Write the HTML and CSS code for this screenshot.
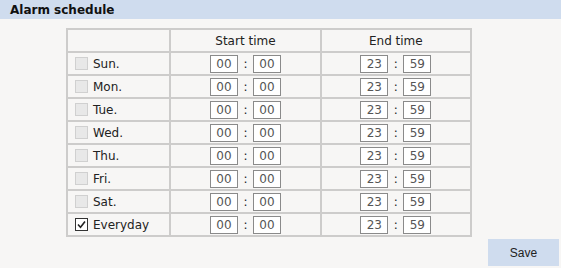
FILE: index.html
```html
<!DOCTYPE html>
<html>
<head>
<meta charset="utf-8">
<link rel="stylesheet" href="styles.css">
</head>
<body>
<div class="bar"><span class="title">Alarm schedule</span></div>
<table class="sched">
  <tr class="head"><th class="c1"></th><th class="c2">Start time</th><th class="c3">End time</th></tr>
  <tr><td class="day"><span class="cb"></span>Sun.</td><td><div class="tm"><span class="in">00</span><span class="col">:</span><span class="in">00</span></div></td><td><div class="tm"><span class="in">23</span><span class="col">:</span><span class="in">59</span></div></td></tr>
  <tr><td class="day"><span class="cb"></span>Mon.</td><td><div class="tm"><span class="in">00</span><span class="col">:</span><span class="in">00</span></div></td><td><div class="tm"><span class="in">23</span><span class="col">:</span><span class="in">59</span></div></td></tr>
  <tr><td class="day"><span class="cb"></span>Tue.</td><td><div class="tm"><span class="in">00</span><span class="col">:</span><span class="in">00</span></div></td><td><div class="tm"><span class="in">23</span><span class="col">:</span><span class="in">59</span></div></td></tr>
  <tr><td class="day"><span class="cb"></span>Wed.</td><td><div class="tm"><span class="in">00</span><span class="col">:</span><span class="in">00</span></div></td><td><div class="tm"><span class="in">23</span><span class="col">:</span><span class="in">59</span></div></td></tr>
  <tr><td class="day"><span class="cb"></span>Thu.</td><td><div class="tm"><span class="in">00</span><span class="col">:</span><span class="in">00</span></div></td><td><div class="tm"><span class="in">23</span><span class="col">:</span><span class="in">59</span></div></td></tr>
  <tr><td class="day"><span class="cb"></span>Fri.</td><td><div class="tm"><span class="in">00</span><span class="col">:</span><span class="in">00</span></div></td><td><div class="tm"><span class="in">23</span><span class="col">:</span><span class="in">59</span></div></td></tr>
  <tr><td class="day"><span class="cb"></span>Sat.</td><td><div class="tm"><span class="in">00</span><span class="col">:</span><span class="in">00</span></div></td><td><div class="tm"><span class="in">23</span><span class="col">:</span><span class="in">59</span></div></td></tr>
  <tr><td class="day"><span class="cb on"><svg viewBox="0 0 13 13" width="13" height="13"><path d="M3 6.5 L5.5 9.2 L10 3.5" fill="none" stroke="#222" stroke-width="1.6"/></svg></span>Everyday</td><td><div class="tm"><span class="in">00</span><span class="col">:</span><span class="in">00</span></div></td><td><div class="tm"><span class="in">23</span><span class="col">:</span><span class="in">59</span></div></td></tr>
</table>
<div class="foot"><button class="save">Save</button></div>
</body>
</html>
```
FILE: styles.css
```css
html, body {
  margin: 0;
  padding: 0;
  background: #f7f6f5;
  font-family: "DejaVu Sans", Verdana, sans-serif;
  font-size: 12px;
  color: #222;
}
.bar {
  height: 19px;
  background: #cfdcee;
  padding-left: 10px;
  display: flex;
  align-items: center;
}
.title {
  font-weight: bold;
  font-size: 12px;
  color: #111;
}
.sched {
  margin: 9px 0 0 66px;
  border-collapse: collapse;
  width: 406px;
}
.sched th, .sched td {
  border: 2px solid #cdcccb;
  padding: 0;
  height: 23px;
  box-sizing: border-box;
}
.sched th {
  font-weight: normal;
  text-align: center;
  color: #222;
}
.c1 { width: 103px; }
.c2 { width: 150px; }
.c3 { width: 150px; }
.day {
  padding-left: 7px !important;
  white-space: nowrap;
}
.cb {
  display: inline-block;
  width: 11px;
  height: 11px;
  border: 1px solid #d0d0d0;
  background: #e8e8e8;
  vertical-align: -2px;
  margin-right: 5px;
  position: relative;
}
.cb.on {
  background: #fff;
  border-color: #333;
}
.cb svg {
  position: absolute;
  left: -1px;
  top: -1px;
}
.tm {
  display: flex;
  justify-content: center;
  align-items: center;
}
.in {
  display: inline-block;
  width: 28px;
  height: 18px;
  box-sizing: border-box;
  border: 1px solid #8a8a8a;
  background: #fff;
  color: #555;
  text-align: center;
  line-height: 16px;
}
.col {
  width: 15px;
  text-align: center;
  color: #222;
}
.foot {
  display: flex;
  justify-content: flex-end;
  padding-right: 2px;
  margin-top: 2px;
}
.save {
  width: 71px;
  height: 27px;
  border: none;
  background: #cfdcee;
  font-family: "Liberation Sans", Arial, sans-serif;
  font-size: 12px;
  color: #222;
  padding: 0;
}
```
